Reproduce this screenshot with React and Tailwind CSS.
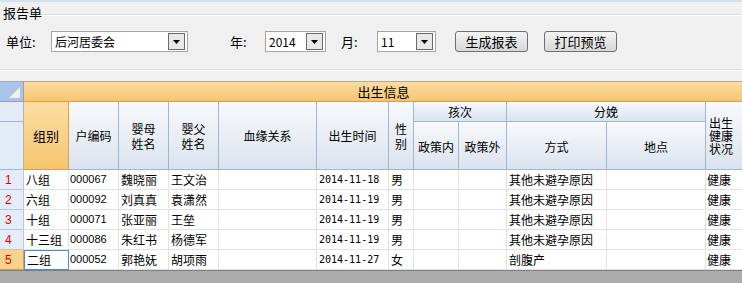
const font = { fontFamily: '"SimSun", "Noto Sans CJK SC", sans-serif' }

const rows = [
  ['八组', '000067', '魏晓丽', '王文治', '2014-11-18', '男', '其他未避孕原因'],
  ['六组', '000092', '刘真真', '袁潇然', '2014-11-19', '男', '其他未避孕原因'],
  ['十组', '000071', '张亚丽', '王垒', '2014-11-19', '男', '其他未避孕原因'],
  ['十三组', '000086', '朱红书', '杨德军', '2014-11-19', '男', '其他未避孕原因'],
  ['二组', '000052', '郭艳妩', '胡项雨', '2014-11-27', '女', '剖腹产'],
]

function Combo({ value, width }) {
  return (
    <div className={`flex items-center h-[21px] border border-[#a5a5a5] bg-white ${width}`}>
      <span className="flex-1 pl-[3px] text-[12px] leading-none">{value}</span>
      <span className="mr-[2px] w-[17px] h-[17px] border border-[#6b6b6b] bg-[#e8e8e8] flex items-center justify-center">
        <svg width="7" height="4" viewBox="0 0 7 4"><path d="M0 0h7L3.5 4z" fill="#000" /></svg>
      </span>
    </div>
  )
}

function Btn({ children }) {
  return (
    <button className="h-[21px] w-[73px] border border-[#707070] rounded-[3px] bg-gradient-to-b from-[#f4f4f4] to-[#d8d8d8] text-[13px] leading-none">
      {children}
    </button>
  )
}

const hdr = 'border-r border-b border-[#9fb6d0] bg-gradient-to-b from-[#f8fafc] to-[#dbe3ee] flex items-center justify-center text-center text-[12px]'
const cell = 'border-r border-b border-[#e2e2e2] bg-white flex items-center leading-none whitespace-nowrap overflow-hidden'

export default function App() {
  return (
    <div className="w-[742px] h-[283px] overflow-hidden bg-[#f0f0f0] text-black" style={font}>
      <div className="h-[2px] bg-[#d4e0f0]" />
      <div className="relative h-[79px]">
        <div className="absolute left-[38px] right-0 top-[12px] border-t border-[#d5dde8] border-b border-b-white" />
        <div className="absolute left-0 right-0 top-[67px] border-t border-[#d5dde8] border-b border-b-white" />
        <div className="absolute left-[2px] top-[4px] text-[13px] leading-none px-[1px]">报告单</div>
        <div className="flex items-center pt-[29px] text-[13px]">
          <span className="ml-[6px] w-[45px]">单位:</span>
          <Combo value="后河居委会" width="w-[137px]" />
          <span className="ml-[42px] w-[35px]">年:</span>
          <Combo value="2014" width="w-[61px]" />
          <span className="ml-[15px] w-[36px]">月:</span>
          <Combo value="11" width="w-[59px]" />
          <span className="ml-[19px]"><Btn>生成报表</Btn></span>
          <span className="ml-[16px]"><Btn>打印预览</Btn></span>
        </div>
      </div>
      <div className="border-t border-[#a9a9a9] overflow-hidden">
        <div className="grid grid-cols-[24px_45px_50px_50px_50px_98px_72px_25px_45px_48px_100px_99px_44px] grid-rows-[20px_20px_48px_repeat(5,20px)] w-[750px]">
          <div className="col-start-1 row-start-1 border-r border-b border-[#8aa5c8] bg-[#a9c4e8] relative">
            <svg className="absolute right-[3px] bottom-[3px]" width="11" height="11" viewBox="0 0 11 11">
              <path d="M11 0V11H0z" fill="#eef2f8" />
            </svg>
          </div>
          <div className="col-start-2 col-span-12 row-start-1 border-b border-[#f39a2c] bg-gradient-to-b from-[#fbdca2] to-[#f4c673] flex items-center justify-center text-[13px] pr-[3px]">
            <span className="-ml-[4px]">出生信息</span>
          </div>
          <div className="col-start-1 row-start-2 border-r border-b border-[#9fb6d0] bg-[#e4ecf7]" />
          <div className="col-start-1 row-start-3 border-r border-b border-[#9fb6d0] bg-[#e4ecf7]" />
          <div className="col-start-2 row-start-2 row-span-2 border-r border-b border-[#f39a2c] bg-gradient-to-b from-[#fcdda4] to-[#f5c66f] flex items-center justify-center text-[13px]">组别</div>
          <div className={`col-start-3 row-start-2 row-span-2 ${hdr}`}>户编码</div>
          <div className={`col-start-4 row-start-2 row-span-2 ${hdr} leading-[15px]`}>婴母<br />姓名</div>
          <div className={`col-start-5 row-start-2 row-span-2 ${hdr} leading-[15px]`}>婴父<br />姓名</div>
          <div className={`col-start-6 row-start-2 row-span-2 ${hdr}`}>血缘关系</div>
          <div className={`col-start-7 row-start-2 row-span-2 ${hdr}`}>出生时间</div>
          <div className={`col-start-8 row-start-2 row-span-2 ${hdr} leading-[15px]`}>性<br />别</div>
          <div className={`col-start-9 col-span-2 row-start-2 ${hdr}`}>孩次</div>
          <div className={`col-start-9 row-start-3 ${hdr} pt-[2px]`}>政策内</div>
          <div className={`col-start-10 row-start-3 ${hdr} pt-[2px]`}>政策外</div>
          <div className={`col-start-11 col-span-2 row-start-2 ${hdr}`}>分娩</div>
          <div className={`col-start-11 row-start-3 ${hdr} pt-[2px]`}>方式</div>
          <div className={`col-start-12 row-start-3 ${hdr} pt-[2px]`}>地点</div>
          <div className="col-start-13 row-start-2 row-span-2 border-r border-b border-[#9fb6d0] bg-gradient-to-b from-[#f8fafc] to-[#dbe3ee] flex items-center pl-[3px] text-[12px] leading-[13px]">出生<br />健康<br />状况</div>

          {rows.map((r, i) => {
            const last = i === rows.length - 1
            return [
              <div key={`n${i}`} className={`border-r border-b ${last ? 'border-[#f39a2c] bg-[#f9d38e]' : 'border-[#b8c8dc] bg-[#e4ecf7]'} flex items-center pl-[5px] text-[12px] text-[#e00000]`} style={{ fontFamily: '"Liberation Sans", sans-serif' }}>{i + 1}</div>,
              <div key={`a${i}`} className={`${cell} text-[12px] pl-[2px] ${last ? '!border !border-[#3c8ee6]' : ''}`}>{r[0]}</div>,
              <div key={`b${i}`} className={`${cell} pl-[1px] text-[11px]`} style={{ fontFamily: '"Liberation Sans", sans-serif' }}>{r[1]}</div>,
              <div key={`c${i}`} className={`${cell} text-[12px] pl-[2px]`}>{r[2]}</div>,
              <div key={`d${i}`} className={`${cell} text-[12px] pl-[2px]`}>{r[3]}</div>,
              <div key={`e${i}`} className={cell} />,
              <div key={`f${i}`} className={`${cell} pl-[2px] text-[10px]`} style={{ fontFamily: '"DejaVu Sans Mono", monospace' }}>{r[4]}</div>,
              <div key={`g${i}`} className={`${cell} text-[12px] pl-[2px]`}>{r[5]}</div>,
              <div key={`h${i}`} className={cell} />,
              <div key={`j${i}`} className={cell} />,
              <div key={`k${i}`} className={`${cell} text-[12px] pl-[2px]`}>{r[6]}</div>,
              <div key={`l${i}`} className={cell} />,
              <div key={`m${i}`} className={`${cell} text-[12px] pl-[1px]`}>健康</div>,
            ]
          })}
        </div>
        <div className="h-[13px] border-t border-[#808080] bg-[#ababab]" />
      </div>
    </div>
  )
}
